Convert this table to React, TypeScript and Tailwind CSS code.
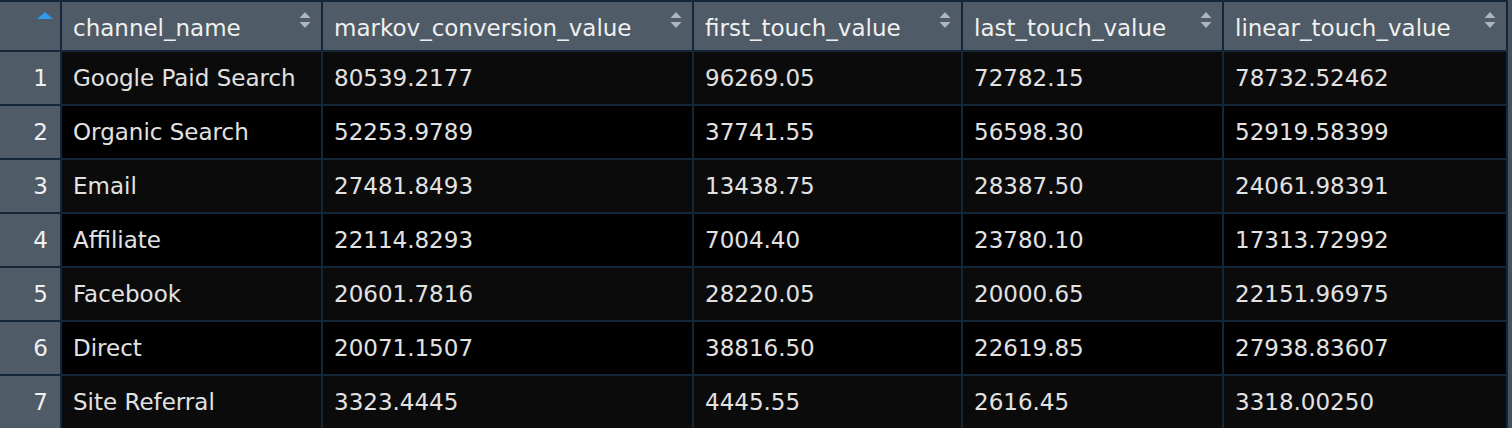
import React from "react"

const columns = [
  "channel_name",
  "markov_conversion_value",
  "first_touch_value",
  "last_touch_value",
  "linear_touch_value",
]

const rows = [
  ["Google Paid Search", "80539.2177", "96269.05", "72782.15", "78732.52462"],
  ["Organic Search", "52253.9789", "37741.55", "56598.30", "52919.58399"],
  ["Email", "27481.8493", "13438.75", "28387.50", "24061.98391"],
  ["Affiliate", "22114.8293", "7004.40", "23780.10", "17313.72992"],
  ["Facebook", "20601.7816", "28220.05", "20000.65", "22151.96975"],
  ["Direct", "20071.1507", "38816.50", "22619.85", "27938.83607"],
  ["Site Referral", "3323.4445", "4445.55", "2616.45", "3318.00250"],
]

function SortIcon() {
  return (
    <svg width="12" height="18" viewBox="0 0 12 18" className="absolute right-[10px] top-[9px]">
      <path d="M6 1 L11.5 7 L0.5 7 Z" fill="#aeb5bc" />
      <path d="M6 17 L11.5 11 L0.5 11 Z" fill="#aeb5bc" />
    </svg>
  )
}

export default function App() {
  return (
    <div className="w-[1512px] h-[428px] overflow-hidden bg-[#46525d]" style={{ fontFamily: '"DejaVu Sans", sans-serif' }}>
      <div className="w-[1508px] bg-[#14263a] pt-[2px] pr-[2px] grid grid-cols-[60px_259px_369px_267px_259px_282px] gap-[2px] text-[23px] text-[#e2e2e2]">
        <div className="relative h-[48px] bg-[#4f5b66]">
          <svg width="16" height="8" viewBox="0 0 16 8" className="absolute left-[37px] top-[10px]">
            <path d="M8 0 L16 7 L0 7 Z" fill="#2f9bea" />
          </svg>
        </div>
        {columns.map((c) => (
          <div key={c} className="relative h-[48px] bg-[#4f5b66] pl-[11px] pt-[4px] flex items-center text-[#f0f0f0]">
            {c}
            <SortIcon />
          </div>
        ))}
        {rows.map((r, i) => (
          <React.Fragment key={i}>
            <div className="h-[52px] bg-[#4f5b66] flex items-center justify-end pr-[12px] text-[#f0f0f0]">
              {i + 1}
            </div>
            {r.map((v, j) => (
              <div
                key={j}
                className={`h-[52px] pl-[11px] flex items-center ${i % 2 === 0 ? "bg-[#0b0b0b]" : "bg-[#000000]"}`}
              >
                {v}
              </div>
            ))}
          </React.Fragment>
        ))}
      </div>
    </div>
  )
}
